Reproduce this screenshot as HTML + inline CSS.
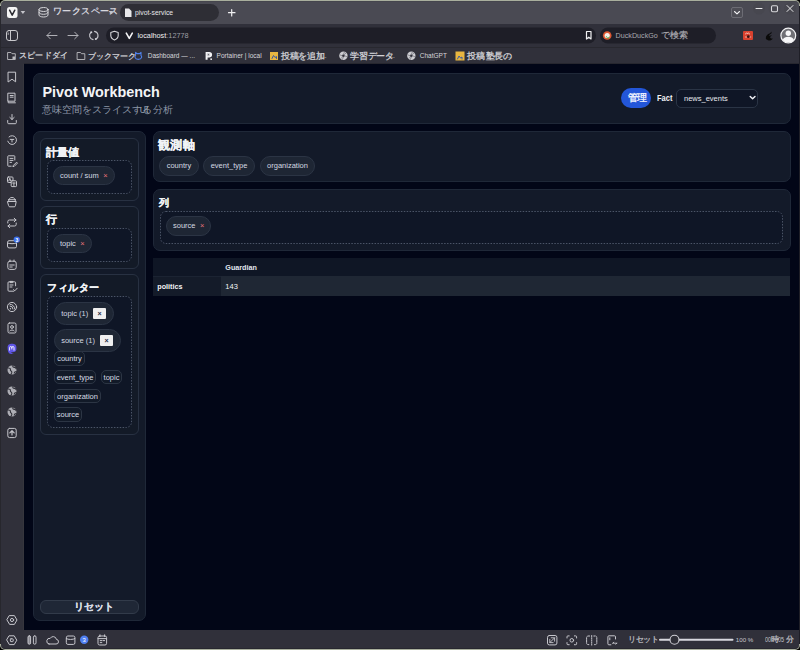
<!DOCTYPE html>
<html><head><meta charset="utf-8">
<style>
*{box-sizing:border-box;margin:0;padding:0}
html,body{width:800px;height:650px;overflow:hidden;background:#000}
body{font-family:"Liberation Sans",sans-serif;position:relative;color:#e5e7eb}
.a{position:absolute}
.jp{letter-spacing:0.25em}
/* chrome */
#frame{left:0;top:0;width:800px;height:650px;background:#a9af9d;border-radius:5px}
#lcol{left:0;top:6px;width:1px;height:638px;background:#27272d}
#rcol{left:799px;top:6px;width:1px;height:638px;background:#1f1f27}
#tabbar{left:1px;top:1px;width:798px;height:23px;background:#4a4a53;border-radius:4px 4px 0 0;border-top:1px solid #45454d}
#addr{left:1px;top:24px;width:798px;height:23px;background:#30303a}
#bm{left:1px;top:47px;width:798px;height:17px;background:#30303a;border-top:1px solid #28282f}
#lpanel{left:1px;top:64px;width:23px;height:566px;background:#30303a;border-right:1px solid #36363d}
#status{left:1px;top:630px;width:798px;height:19px;background:#30303a;border-bottom:1px solid #27272f;border-radius:0 0 4px 4px}
#page{left:24px;top:63px;width:775px;height:567px;background:#020617;border-top:1px solid #27272f}
.ct{color:#e3e3e6;font-size:8px;white-space:nowrap}
/* page */
.card{background:#131a29;border:1px solid #1f2838;border-radius:7px}
.sec{background:#131a27;border:1px solid #283142;border-radius:6px}
.drop{background:#0f1524;border:1px dashed #3b4352;border-radius:6px}
.chip{background:#1e2634;border:1px solid #2b3444;border-radius:10px;color:#d4d9e1;font-size:7.5px;white-space:nowrap;line-height:18px}
.x{color:#e8737a;font-size:7.5px}
.tag{background:#121a28;border:1px solid #2c3544;border-radius:5px;color:#d8dde5;font-size:7.5px;white-space:nowrap;line-height:12px;padding-top:1px;text-align:center}
.lbl{font-size:9px;font-weight:700;color:#f1f3f6;white-space:nowrap}
.btnx{background:#efefef;border-radius:1px;color:#1e2a48;font-size:7px;font-weight:700;text-align:center;line-height:11px}
</style></head><body>
<div id="frame" class="a"></div>
<div id="tabbar" class="a"></div>
<div id="addr" class="a"></div>
<div id="bm" class="a"></div>
<div id="lpanel" class="a"></div>
<div id="status" class="a"></div>
<div id="page" class="a"></div>
<div id="lcol" class="a"></div><div id="rcol" class="a"></div>

<!-- ===== browser chrome ===== -->
<svg class="a" style="left:0;top:0" width="800" height="650" viewBox="0 0 800 650">
 <g fill="none" stroke="#d6d6da" stroke-width="1" stroke-linecap="round" stroke-linejoin="round">
  <!-- vivaldi logo -->
  <rect x="7" y="7" width="10.5" height="11" rx="2.5" fill="#f4f4f4" stroke="none"/>
  <path d="M9.6 10.2 L12.2 15.2 L14.8 10.2" stroke="#2a2a30" stroke-width="1.5"/>
  <path d="M20.6 10.9 L25.2 10.9 L22.9 13.9 Z" fill="#c4c4ca" stroke="none"/>
  <!-- workspace stack -->
  <ellipse cx="43.5" cy="9.5" rx="4.5" ry="2"/>
  <path d="M39 9.5 v5.5 c0 1.2 2 2 4.5 2 s4.5-.8 4.5-2 v-5.5 M39 12.3 c0 1.2 2 2 4.5 2 s4.5-.8 4.5-2"/>
  <path d="M108.6 11.1 L113.2 11.1 L110.9 14 Z" fill="#c4c4ca" stroke="none"/>
  <!-- tab -->
  <rect x="120" y="4" width="99" height="17" rx="8.5" fill="#2e2e35" stroke="none"/>
  <path d="M125 8.5 h4 l2.5 2.5 v6 h-6.5 z" fill="#e8e8ea" stroke="none"/>
  <!-- plus -->
  <path d="M231.7 9.5 v6.5 M228.5 12.7 h6.5" stroke="#f0f0f2" stroke-width="1.2"/>
  <!-- tab dropdown button -->
  <rect x="731.5" y="7.5" width="11" height="10" rx="1.5" fill="#4d4d55" stroke="#6c6c74" stroke-width="1"/>
  <path d="M734.5 11.5 l2.5 2.3 l2.5 -2.3" stroke="#f2f2f4" stroke-width="1.1"/>
  <!-- window controls -->
  <circle cx="759" cy="8.5" r="6" fill="#47474f" stroke="none"/>
  <path d="M756 8.5 h6" stroke="#e8e8ea"/>
  <circle cx="774.5" cy="8.5" r="6" fill="#47474f" stroke="none"/>
  <rect x="771.5" y="5.7" width="6" height="6" rx="1.2" stroke="#d8d8dc" stroke-width="1.1"/>
  <circle cx="790" cy="8.5" r="6" fill="#47474f" stroke="none"/>
  <path d="M787 5.5 l6 6 M793 5.5 l-6 6" stroke="#e8e8ea"/>

  <!-- address row -->
  <rect x="6.5" y="30.5" width="11" height="10" rx="2.5" stroke="#c8c8cc"/>
  <path d="M10.5 30.5 v10" stroke="#c8c8cc"/>
  <path d="M8.2 33 v1.5" stroke="#c8c8cc" stroke-width=".8"/>
  <path d="M47 35.5 h10 M50.3 32.2 l-3.3 3.3 l3.3 3.3" stroke="#b0b0b6"/>
  <path d="M68 35.5 h10 M74.7 32.2 l3.3 3.3 l-3.3 3.3" stroke="#b0b0b6"/>
  <path d="M94.53 31.36 A4.2 4.2 0 0 1 95.9 39.14 M93.07 39.64 A4.2 4.2 0 0 1 91.1 32.28" stroke="#c4c4ca" stroke-width="1.1"/><circle cx="91.3" cy="32.3" r="1" fill="#d0d0d6" stroke="none"/><circle cx="95.8" cy="39" r="1" fill="#d0d0d6" stroke="none"/>
  <rect x="106" y="27.5" width="490" height="16" rx="8" fill="#1e1e27" stroke="none"/>
  <path d="M114.5 31.2 l3.7 1.3 v3 c0 2.3 -1.7 3.7 -3.7 4.5 c-2 -.8 -3.7 -2.2 -3.7 -4.5 v-3 z" stroke="#d4d4d8" stroke-width="1.1"/>
  <path d="M126.3 33.2 l3 5.2 l3 -5.2" stroke="#f4f4f6" stroke-width="1.6"/>
  <path d="M586.5 31.5 h4.5 v7.5 l-2.25 -1.8 l-2.25 1.8 z" stroke="#f0f0f2" stroke-width="1.2"/>
  <rect x="600" y="27.5" width="116" height="16" rx="8" fill="#1e1e27" stroke="none"/>
  <circle cx="607.2" cy="35.5" r="4.3" fill="#de5833" stroke="none"/>
  <circle cx="607.2" cy="35.5" r="2.6" fill="#f6efe8" stroke="none"/>
  <path d="M606.4 36.5 l1.5 2 l1.2 -1.5" stroke="#4caf50" stroke-width=".9"/>
  <!-- right icons -->
  <rect x="743" y="31" width="10" height="9" rx="1" fill="#d9412e" stroke="none"/>
  <path d="M745.5 34 a1 1 0 1 1 2 0 a1 1 0 1 1 2 0 M745.3 37 h5.5" stroke="#f3c9c2" stroke-width=".8"/>
  <circle cx="748.3" cy="36.7" r="1.4" fill="#3a1010" stroke="none"/>
  <path d="M765.8 38.6 c-.2 -2.6 1.6 -4.6 4.2 -5.4 l1.6 -1.6 l-.2 1.8 c-1.6 .6 -2.4 1.6 -2.2 2.6 c1 -.6 2 -.6 2.8 -.2 c-1 .2 -1.8 .8 -1.8 1.6 c.2 1 1.4 1.4 2.6 1 c-1.2 1.8 -3.2 2.4 -4.8 1.8 c-1.2 -.4 -2 -.8 -2.2 -1.6 z" fill="#0a0a0a" stroke="none"/>
  <circle cx="788.3" cy="35.6" r="7.4" fill="#6f6f75" stroke="#f2f2f4" stroke-width="1.2"/>
  <circle cx="788.3" cy="33.2" r="2.7" fill="#f6f6f8" stroke="none"/>
  <path d="M782.6 40 c1 -2.4 3 -3.2 5.7 -3.2 s4.7 .8 5.7 3.2 c-1.3 1.6 -3.3 2.6 -5.7 2.6 s-4.4 -1 -5.7 -2.6 z" fill="#f6f6f8" stroke="none"/>

  <!-- bookmarks -->
  <path d="M8 52.5 h3 l1 1.2 h3.3 v5.8 h-7.3 z" stroke="#bdbdc2" stroke-width=".9"/>
  <rect x="12.5" y="56.5" width="2.6" height="2.6" fill="#bdbdc2" stroke="none"/>
  <path d="M77.5 52.5 h3 l1 1.2 h3.3 v5.8 h-7.3 z" stroke="#bdbdc2" stroke-width=".9"/>
  <path d="M135.6 52.4 l1.4 1.2 h2.6 l1.4 -1.2 v3 c.6 .6 .8 1.3 .6 2 c-.4 1.3 -1.6 2 -3.3 2 s-2.9 -.7 -3.3 -2 c-.2 -.7 0 -1.4 .6 -2 z" fill="none" stroke="#4f82ec" stroke-width="1.1"/>
  <path d="M205.6 52 h3.6 c1.9 0 2.9 1.1 2.9 2.7 s-1 2.7 -2.9 2.7 h-1.6 v2.4 h-2 z" fill="#f4f4f6" stroke="none"/><rect x="207.6" y="53.6" width="1.6" height="2.2" fill="#30303a"/><rect x="210.4" y="58.4" width="1.5" height="1.6" fill="#f4f4f6" stroke="none"/>
  <rect x="270" y="52" width="8" height="8" fill="#e8b640" stroke="none"/>
  <path d="M272 58.5 l1.5 -3 l1.5 2 l1.5 -1 v2" stroke="#3a5aa0" stroke-width="1"/>
  <circle cx="343.4" cy="55.8" r="4.2" fill="#cdcdd2" stroke="none"/><circle cx="343.4" cy="55.8" r="1.3" fill="#30303a" stroke="none"/><path d="M339.79999999999995 54.8 l2.2 1 M347.0 56.8 l-2.2 -1 M342.4 59.4 l1 -2.2 M344.4 52.199999999999996 l-1 2.2 M341.0 58.4 l1.4 -1.4 M345.79999999999995 53.199999999999996 l-1.4 1.4" stroke="#6a6a72" stroke-width=".7"/>
  <circle cx="411.3" cy="55.8" r="4.2" fill="#cdcdd2" stroke="none"/><circle cx="411.3" cy="55.8" r="1.3" fill="#30303a" stroke="none"/><path d="M407.7 54.8 l2.2 1 M414.90000000000003 56.8 l-2.2 -1 M410.3 59.4 l1 -2.2 M412.3 52.199999999999996 l-1 2.2 M408.90000000000003 58.4 l1.4 -1.4 M413.7 53.199999999999996 l-1.4 1.4" stroke="#6a6a72" stroke-width=".7"/>
  <rect x="455.5" y="51.5" width="9" height="9" fill="#e8b640" stroke="none"/>
  <path d="M457.5 59 l1.5 -3 l1.5 2 l1.5 -1 v2" stroke="#3a5aa0" stroke-width="1"/>
 </g>
</svg>
<!-- SIDE -->
<svg class="a" style="left:0;top:60px" width="24" height="570" viewBox="0 60 24 570"><g fill="none" stroke="#c6c6cc" stroke-width="1" stroke-linecap="round" stroke-linejoin="round"><g transform="translate(12,77)"><path d="M-3.6 -4.8 h7.2 v9.6 l-3.6 -2.6 l-3.6 2.6 z"/></g><g transform="translate(12,98)"><path d="M-3.8 -4.8 h6.8 v8 h-6.8 z M-3.8 3.2 v1.6 h7.2 M-1.8 -2.5 h3 M-1.8 -0.8 h3"/></g><g transform="translate(12,119)"><path d="M0 -4.5 v5 M-2.2 -1.6 l2.2 2.1 l2.2 -2.1 M-4.3 1.5 v2.2 a1 1 0 0 0 1 1 h6.6 a1 1 0 0 0 1 -1 v-2.2"/></g><g transform="translate(12,140)"><path d="M-4.2 1.2 a4.4 4.4 0 1 0 1.2 -4.3"/><path d="M-1.8 -0.6 h3.6 M0 -0.6 v2.6"/></g><g transform="translate(12,161)"><path d="M2.8 -1 v-3.6 a.6 .6 0 0 0 -.6 -.6 h-5.8 a.6 .6 0 0 0 -.6 .6 v9.2 a.6 .6 0 0 0 .6 .6 h2.8 M-2 -2.6 h3 M-2 -0.6 h3 M-2 1.4 h1.5 M1.2 4.6 l3.4 -3.4 l.9 .9 l-3.4 3.4 h-.9 z"/></g><g transform="translate(12,182)"><rect x="-4.5" y="-5" width="5.5" height="5.5" rx=".8"/><rect x="-0.8" y="-1.2" width="5.3" height="5.8" rx=".8" fill="#2f2f37"/><path d="M0.6 1 h2.6 M1.9 1 v2.5 M-3.2 -1 l1 -2.8 l1 2.8"/></g><g transform="translate(12,202.3)"><path d="M-4.2 -0.8 h8.4 l-.8 4.3 a1.2 1.2 0 0 1 -1.2 1 h-4.4 a1.2 1.2 0 0 1 -1.2 -1 z M-3.4 -0.8 a3.4 4 0 0 1 6.8 0 M-3.6 -2.6 h7.2"/></g><g transform="translate(12,223)"><path d="M-4.2 0 v-1.4 a1.6 1.6 0 0 1 1.6 -1.6 h6.6 M2.2 -4.8 l1.8 1.8 l-1.8 1.8 M4.2 0 v1.4 a1.6 1.6 0 0 1 -1.6 1.6 h-6.6 M-2.2 4.8 l-1.8 -1.8 l1.8 -1.8"/></g><g transform="translate(12,244.2)"><path d="M-4.5 -2 a1.5 1.5 0 0 1 1.5 -1.5 h6 a1.5 1.5 0 0 1 1.5 1.5 v4.2 a1.5 1.5 0 0 1 -1.5 1.5 h-6 a1.5 1.5 0 0 1 -1.5 -1.5 z M-4.5 -1.2 c1.5 1 7.5 1 9 0"/><circle cx="4.8" cy="-4.6" r="3.2" fill="#3d6fe8" stroke="none"/><text x="4.8" y="-2.6" font-size="5" font-family="Liberation Sans" fill="#fff" stroke="none" text-anchor="middle" font-weight="700">3</text></g><g transform="translate(12,265)"><rect x="-4.2" y="-3.8" width="8.4" height="8.2" rx="2"/><path d="M-2 -5 v1.6 M2 -5 v1.6 M-2.2 0 h4.4 M-2.2 2 h2.4"/></g><g transform="translate(12,286.4)"><path d="M1.8 4.8 h-4.8 a1 1 0 0 1 -1 -1 v-7.4 a1 1 0 0 1 1 -1 h5.6 a1 1 0 0 1 1 1 v3 M-1.6 -5 h2.4 v1.2 h-2.4 z M-2 -1.4 h3 M-2 0.6 h2 M1.6 3.2 l1.2 1.2 l2.4 -2.6"/></g><g transform="translate(12,307)"><circle r="4.6"/><path d="M-2 -1 a3 3 0 0 1 3 3 M-2 -2.8 a4.8 4.8 0 0 1 4.8 4.8"/><circle cx="-1.6" cy="1.8" r=".7" fill="#c6c6cc" stroke="none"/></g><g transform="translate(12,328)"><rect x="-4" y="-5" width="8" height="10" rx="1.4"/><circle cy="-1" r="1.4"/><path d="M-2.4 3 c.4 -1.4 4.4 -1.4 4.8 0"/></g><g transform="translate(12,349)"><path d="M-4.4 -1.5 c0 -3 1.8 -3.8 4.4 -3.8 s4.4 .8 4.4 3.8 v1.8 c0 2 -1.5 3 -4 3 l-1.2 0 c.2 1 1 1.4 2.6 1.2 c-2.6 1.2 -5.4 .6 -5.8 -2.4 c-.3 -1.2 -.4 -2.4 -.4 -3.6 z" fill="#5f55e6" stroke="none"/><path d="M-2.4 1.2 v-2.6 a1.1 1.1 0 0 1 2.2 0 v1.4 M-0.2 -1.4 a1.1 1.1 0 0 1 2.2 0 v2.6" stroke="#fff" stroke-width=".9"/></g><g transform="translate(12,370)"><circle r="4.5" fill="#aeaeb5" stroke="none"/><path d="M-3.8 -2 c1.5 0 2.5 .5 2.2 1.6 c-.3 1 1 1.2 1.4 2.4 c.3 .9 -.4 1.8 -.9 2.4 M1 -4.4 c-.6 1 .2 1.8 1.4 1.8 c1 0 1.6 .6 1.8 1.4 M4.2 1.5 c-1 0 -1.8 .6 -2 1.6" stroke="#2f2f37" stroke-width="1.1"/></g><g transform="translate(12,391)"><circle r="4.5" fill="#aeaeb5" stroke="none"/><path d="M-3.8 -2 c1.5 0 2.5 .5 2.2 1.6 c-.3 1 1 1.2 1.4 2.4 c.3 .9 -.4 1.8 -.9 2.4 M1 -4.4 c-.6 1 .2 1.8 1.4 1.8 c1 0 1.6 .6 1.8 1.4 M4.2 1.5 c-1 0 -1.8 .6 -2 1.6" stroke="#2f2f37" stroke-width="1.1"/></g><g transform="translate(12,412)"><circle r="4.5" fill="#aeaeb5" stroke="none"/><path d="M-3.8 -2 c1.5 0 2.5 .5 2.2 1.6 c-.3 1 1 1.2 1.4 2.4 c.3 .9 -.4 1.8 -.9 2.4 M1 -4.4 c-.6 1 .2 1.8 1.4 1.8 c1 0 1.6 .6 1.8 1.4 M4.2 1.5 c-1 0 -1.8 .6 -2 1.6" stroke="#2f2f37" stroke-width="1.1"/></g><g transform="translate(12,433)"><rect x="-4.2" y="-4.6" width="8.4" height="9.2" rx="1.8"/><path d="M0 -2.4 v4.4 M-2.2 -0.2 l2.2 -2.2 l2.2 2.2" stroke-width="1.2"/></g><g transform="translate(12,620)"><path d="M-2.4 -4.4 h4.8 l2.6 4.4 l-2.6 4.4 h-4.8 l-2.6 -4.4 z"/><circle r="1.6"/></g></g></svg>
<svg class="a" style="left:0;top:630px" width="800" height="20" viewBox="0 630 800 20"><g fill="none" stroke="#c6c6cc" stroke-width="1" stroke-linecap="round" stroke-linejoin="round"><g transform="translate(11.8,640.2)"><path d="M-2.4 -4.4 h4.8 l2.6 4.4 l-2.6 4.4 h-4.8 l-2.6 -4.4 z"/><rect x="-1.4" y="-1.4" width="2.8" height="2.8" rx=".6"/></g><rect x="28" y="635.8" width="2.6" height="8.4" rx="1.3" fill="#8a8a92"/><rect x="33.4" y="635.8" width="2.6" height="8.4" rx="1.3"/><path d="M49 644 h7 a2.3 2.3 0 0 0 .4 -4.6 a3.3 3.3 0 0 0 -6.2 -1 a2.8 2.8 0 0 0 -1.2 5.6 z"/><path d="M66.3 637.5 a1.5 1.5 0 0 1 1.5 -1.5 h5.6 a1.5 1.5 0 0 1 1.5 1.5 v5.4 a1.5 1.5 0 0 1 -1.5 1.5 h-5.6 a1.5 1.5 0 0 1 -1.5 -1.5 z M66.3 638.6 c1.6 1.2 7 1.2 8.6 0"/><circle cx="84.2" cy="639.8" r="4.2" fill="#4f7ff0" stroke="none"/><text x="84.2" y="642" font-size="6" font-family="Liberation Sans" fill="#fff" stroke="none" text-anchor="middle">3</text><rect x="98" y="636" width="8.6" height="9" rx="1.6"/><path d="M100 634.8 v1.8 M104.6 634.8 v1.8 M98 638.6 h8.6 M100.2 640.6 h1.6 M103 640.6 h1.6 M100.2 642.6 h1.6"/><rect x="547.5" y="635.5" width="9.4" height="9.4" rx="1.8"/><path d="M549.8 642.6 l4.8 -4.8 M551.2 637.8 h3.4 v3.4 M549.8 639.3 v3.3 h3.3" stroke-width=".9"/><path d="M567 638 v-1.2 a.9 .9 0 0 1 .9 -.9 h1.3 M574.4 635.9 h1.3 a.9 .9 0 0 1 .9 .9 v1.2 M576.6 642.6 v1.2 a.9 .9 0 0 1 -.9 .9 h-1.3 M569.2 644.7 h-1.3 a.9 .9 0 0 1 -.9 -.9 v-1.2"/><circle cx="571.8" cy="640.3" r="1.8"/><path d="M589.6 636 h-1.6 a1.4 1.4 0 0 0 -1.4 1.4 v5.8 a1.4 1.4 0 0 0 1.4 1.4 h1.6 M593.8 636 h1.6 a1.4 1.4 0 0 1 1.4 1.4 v5.8 a1.4 1.4 0 0 1 -1.4 1.4 h-1.6 M591.7 635.5 v9.6" stroke-dasharray="1.2 1"/><path d="M615.5 639 v-2.2 a1 1 0 0 0 -1 -1 h-5.6 a1 1 0 0 0 -1 1 v7 a1 1 0 0 0 1 1 h2 M609.8 637.8 v2" /><path d="M612.8 643.2 h4 M612.8 643.2 l1 -1 M616.8 643.2 l-1 1" stroke-width=".9"/><path d="M660 639.8 h72.5" stroke="#d8d8de" stroke-width="2"/><circle cx="674.5" cy="639.8" r="4.5" fill="#2f2f37" stroke="#d0d0d6" stroke-width="1.1"/></g></svg><div class="a" style="left:53.11px;top:7.47px;font-size:8.86px;line-height:1;letter-spacing:0.39px;color:#dcdce0;font-weight:400;white-space:nowrap;-webkit-text-stroke:0.25px #dcdce0;">ワークスペース</div><div class="a" style="left:135.00px;top:9.84px;font-size:6.8px;line-height:1;color:#e6e6ea;font-weight:400;white-space:nowrap;">pivot-service</div><div class="a" style="left:137.50px;top:31.62px;font-size:7.3px;line-height:1;color:#f0f0f2;font-weight:400;white-space:nowrap;">localhost<span style="color:#9d9da5">:12778</span></div><div class="a" style="left:615.50px;top:32.41px;font-size:7.2px;line-height:1;color:#a9a9af;font-weight:400;white-space:nowrap;">DuckDuckGo</div><div class="a" style="left:660.97px;top:30.91px;font-size:9.29px;line-height:1;letter-spacing:-0.06px;color:#a9a9af;font-weight:400;white-space:nowrap;-webkit-text-stroke:0.2px #a9a9af;">で検索</div><div class="a" style="left:18.85px;top:52.00px;font-size:8.00px;line-height:1;letter-spacing:0.25px;color:#d6d6da;font-weight:400;white-space:nowrap;-webkit-text-stroke:0.25px #d6d6da;">スピードダイ</div><div class="a" style="left:58.30px;top:53.00px;font-size:6.5px;line-height:1;color:#d6d6da;font-weight:400;white-space:nowrap;">...</div><div class="a" style="left:87.57px;top:51.96px;font-size:8.29px;line-height:1;letter-spacing:0.12px;color:#d6d6da;font-weight:400;white-space:nowrap;-webkit-text-stroke:0.25px #d6d6da;">ブックマーク</div><div class="a" style="left:147.70px;top:53.00px;font-size:6.5px;line-height:1;color:#d6d6da;font-weight:400;white-space:nowrap;">Dashboard — ...</div><div class="a" style="left:216.60px;top:53.00px;font-size:6.5px;line-height:1;color:#d6d6da;font-weight:400;white-space:nowrap;">Portainer | local</div><div class="a" style="left:281.10px;top:51.55px;font-size:9.00px;line-height:1;letter-spacing:-0.30px;color:#d6d6da;font-weight:400;white-space:nowrap;-webkit-text-stroke:0.25px #d6d6da;">投稿を追加</div><div class="a" style="left:317.20px;top:53.00px;font-size:6.5px;line-height:1;color:#d6d6da;font-weight:400;white-space:nowrap;">‹ ...</div><div class="a" style="left:350.30px;top:51.55px;font-size:9.00px;line-height:1;letter-spacing:-0.30px;color:#d6d6da;font-weight:400;white-space:nowrap;-webkit-text-stroke:0.25px #d6d6da;">学習データ</div><div class="a" style="left:385.50px;top:53.00px;font-size:6.5px;line-height:1;color:#d6d6da;font-weight:400;white-space:nowrap;">- ...</div><div class="a" style="left:419.80px;top:53.00px;font-size:6.5px;line-height:1;color:#d6d6da;font-weight:400;white-space:nowrap;">ChatGPT</div><div class="a" style="left:467.10px;top:51.55px;font-size:9.00px;line-height:1;letter-spacing:-0.25px;color:#d6d6da;font-weight:400;white-space:nowrap;-webkit-text-stroke:0.25px #d6d6da;">投稿</div><div class="a" style="left:482.20px;top:53.00px;font-size:6.5px;line-height:1;color:#d6d6da;font-weight:400;white-space:nowrap;">‹</div><div class="a" style="left:485.80px;top:51.55px;font-size:9.00px;line-height:1;letter-spacing:-0.30px;color:#d6d6da;font-weight:400;white-space:nowrap;-webkit-text-stroke:0.25px #d6d6da;">塾長の</div><div class="a" style="left:506.20px;top:53.00px;font-size:6.5px;line-height:1;color:#d6d6da;font-weight:400;white-space:nowrap;">...</div><div class="a" style="left:627.69px;top:635.58px;font-size:8.14px;line-height:1;letter-spacing:-0.11px;color:#c4c4ca;font-weight:400;white-space:nowrap;-webkit-text-stroke:0.2px #c4c4ca;">リセット</div><div class="a" style="left:735.80px;top:636.95px;font-size:6.2px;line-height:1;color:#c4c4ca;font-weight:400;white-space:nowrap;">100 %</div><div class="a" style="left:764.60px;top:636.81px;font-size:6.6px;line-height:1;color:#c4c4ca;font-weight:400;white-space:nowrap;transform:scaleX(0.82);transform-origin:0 0">00</div><div class="a" style="left:771.00px;top:636.00px;font-size:8.00px;line-height:1;letter-spacing:0.00px;color:#c4c4ca;font-weight:400;white-space:nowrap;-webkit-text-stroke:0.2px #c4c4ca;">時</div><div class="a" style="left:777.60px;top:636.81px;font-size:6.6px;line-height:1;color:#c4c4ca;font-weight:400;white-space:nowrap;transform:scaleX(0.82);transform-origin:0 0">05</div><div class="a" style="left:785.80px;top:636.00px;font-size:8.00px;line-height:1;letter-spacing:0.00px;color:#c4c4ca;font-weight:400;white-space:nowrap;-webkit-text-stroke:0.2px #c4c4ca;">分</div>
<!-- /SIDE -->
<!-- PAGE -->
<div class="a card" style="left:33px;top:73px;width:758px;height:51px"></div>
<div class="a" style="left:42.5px;top:83.7px;font-size:14.4px;font-weight:700;color:#f3f4f6;white-space:nowrap;line-height:normal">Pivot Workbench</div>
<div class="a" style="left:41.74px;top:105.05px;font-size:9.64px;line-height:1;letter-spacing:0.07px;color:#8e97a7;font-weight:400;white-space:nowrap;-webkit-text-stroke:0px #8e97a7;">意味空間をスライスする分析</div>
<div class="a" style="left:139.80px;top:105.92px;font-size:8.6px;line-height:1;color:#97a0b0;font-weight:400;white-space:nowrap;">UI</div>
<div class="a" style="left:621px;top:88px;width:30px;height:20px;background:#2356d8;border-radius:10px"></div>
<div class="a" style="left:627.96px;top:92.94px;font-size:10.43px;line-height:1;letter-spacing:-0.57px;color:#f4f6ff;font-weight:400;white-space:nowrap;-webkit-text-stroke:0.3px #f4f6ff;">管理</div>
<div class="a" style="left:656.60px;top:94.10px;font-size:8.5px;line-height:1;color:#f1f3f6;font-weight:700;white-space:nowrap;transform:scaleX(0.88);transform-origin:0 0">Fact</div>
<div class="a" style="left:676px;top:89px;width:82px;height:19px;background:#0f1626;border:1px solid #2a3445;border-radius:5px"></div>
<div class="a" style="left:684px;top:93.5px;font-size:7.5px;color:#e8eaee;white-space:nowrap">news_events</div>
<svg class="a" style="left:748px;top:94px" width="10" height="8"><path d="M2.2 2.4 L4.6 4.8 L7 2.4" fill="none" stroke="#f2f4f8" stroke-width="1.4" stroke-linecap="round" stroke-linejoin="round"/></svg>
<div class="a card" style="left:33px;top:131px;width:113px;height:490px"></div>
<div class="a sec" style="left:40px;top:138px;width:99px;height:63px"></div>
<div class="a" style="left:46.43px;top:146.59px;font-size:10.71px;line-height:1;letter-spacing:-0.14px;color:#f1f3f6;font-weight:700;white-space:nowrap;-webkit-text-stroke:0.2px #f1f3f6;">計量値</div>
<svg class="a" style="left:47px;top:160px" width="85" height="34"><rect x="0.5" y="0.5" width="84" height="33" rx="5.5" fill="#0f1626" stroke="#4b5467" stroke-width="1" stroke-dasharray="1.5 1.4"/></svg>
<div class="a chip" style="left:52.5px;top:166px;width:62px;height:19px;padding-left:6.5px">count / sum<span class="x" style="margin-left:4.5px">×</span></div>
<div class="a sec" style="left:40px;top:206px;width:99px;height:63px"></div>
<div class="a" style="left:46.36px;top:213.99px;font-size:11.43px;line-height:1;letter-spacing:-0.57px;color:#f1f3f6;font-weight:700;white-space:nowrap;-webkit-text-stroke:0.2px #f1f3f6;">行</div>
<svg class="a" style="left:47px;top:228px" width="85" height="34"><rect x="0.5" y="0.5" width="84" height="33" rx="5.5" fill="#0f1626" stroke="#4b5467" stroke-width="1" stroke-dasharray="1.5 1.4"/></svg>
<div class="a chip" style="left:52.5px;top:234px;width:39px;height:19px;padding-left:6.5px">topic<span class="x" style="margin-left:4.5px">×</span></div>
<div class="a sec" style="left:40px;top:274px;width:99px;height:160.5px"></div>
<div class="a" style="left:47.03px;top:282.74px;font-size:9.71px;line-height:1;letter-spacing:0.51px;color:#f1f3f6;font-weight:700;white-space:nowrap;-webkit-text-stroke:0.2px #f1f3f6;">フィルター</div>
<svg class="a" style="left:47px;top:296px" width="85" height="132"><rect x="0.5" y="0.5" width="84" height="131" rx="5.5" fill="#0f1626" stroke="#4b5467" stroke-width="1" stroke-dasharray="1.5 1.4"/></svg>
<div class="a chip" style="left:54px;top:302px;width:60px;height:23px;border-radius:12px;line-height:21px;padding-left:6.2px">topic (1)</div>
<div class="a btnx" style="left:93px;top:308px;width:13px;height:11px">×</div>
<div class="a chip" style="left:54px;top:329px;width:67px;height:23px;border-radius:12px;line-height:21px;padding-left:6.2px">source (1)</div>
<div class="a btnx" style="left:100px;top:334.5px;width:13px;height:11px">×</div>
<div class="a tag" style="left:54px;top:351px;width:31px;height:14.5px">country</div>
<div class="a tag" style="left:54px;top:370px;width:42px;height:14px">event_type</div>
<div class="a tag" style="left:101px;top:370px;width:21px;height:14px">topic</div>
<div class="a tag" style="left:54px;top:388.5px;width:47px;height:14px">organization</div>
<div class="a tag" style="left:54px;top:407px;width:28px;height:14.5px">source</div>
<div class="a" style="left:40px;top:600px;width:99px;height:13.5px;background:#1f2736;border:1px solid #323b4a;border-radius:6px"></div>
<div class="a" style="left:74.04px;top:602.06px;font-size:9.57px;line-height:1;letter-spacing:0.12px;color:#d8dde5;font-weight:700;white-space:nowrap;-webkit-text-stroke:0.2px #d8dde5;">リセット</div>
<div class="a card" style="left:153px;top:131px;width:638px;height:50.5px"></div>
<div class="a" style="left:157.79px;top:139.38px;font-size:12.14px;line-height:1;letter-spacing:0.49px;color:#f1f3f6;font-weight:700;white-space:nowrap;-webkit-text-stroke:0.2px #f1f3f6;">観測軸</div>
<div class="a chip" style="left:159px;top:156px;width:40px;height:20px;text-align:center">country</div>
<div class="a chip" style="left:203px;top:156px;width:52px;height:20px;text-align:center">event_type</div>
<div class="a chip" style="left:260px;top:156px;width:55px;height:20px;text-align:center">organization</div>
<div class="a card" style="left:153px;top:189px;width:638px;height:61.5px"></div>
<div class="a" style="left:159.33px;top:198.14px;font-size:9.71px;line-height:1;letter-spacing:0.71px;color:#f1f3f6;font-weight:700;white-space:nowrap;-webkit-text-stroke:0.2px #f1f3f6;">列</div>
<svg class="a" style="left:160px;top:211px" width="623" height="33"><rect x="0.5" y="0.5" width="622" height="32" rx="5.5" fill="#0f1626" stroke="#4b5467" stroke-width="1" stroke-dasharray="1.5 1.4"/></svg>
<div class="a chip" style="left:165.5px;top:216px;width:45px;height:19.5px;padding-left:6.5px">source<span class="x" style="margin-left:4.5px">×</span></div>
<div class="a" style="left:153px;top:258px;width:637px;height:18px;background:#0f1625"></div>
<div class="a" style="left:153px;top:276px;width:68px;height:20px;background:#141b29;border-top:1px solid #1b2332"></div>
<div class="a" style="left:221px;top:276px;width:569px;height:20px;background:#1f2734"></div>
<div class="a" style="left:225.3px;top:262.5px;font-size:7.2px;font-weight:700;color:#e2e6ee;white-space:nowrap">Guardian</div>
<div class="a" style="left:157.3px;top:282px;font-size:7.2px;font-weight:700;color:#f3f4f6;white-space:nowrap">politics</div>
<div class="a" style="left:225.3px;top:282px;font-size:7.5px;color:#f3f4f6;white-space:nowrap">143</div>
<!-- /PAGE -->
</body></html>
